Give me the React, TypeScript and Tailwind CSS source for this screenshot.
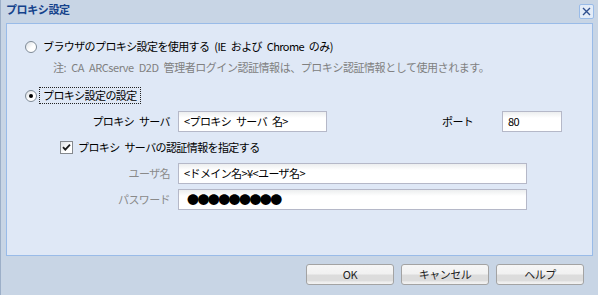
import React from "react";

const FONT = '"Noto Sans CJK JP", "Liberation Sans", sans-serif';

function Radio({ checked }: { checked?: boolean }) {
  return (
    <span className="relative flex h-[12px] w-[12px] shrink-0 items-center justify-center rounded-full border border-[#7f8b97] bg-[linear-gradient(135deg,#d9dde2_0%,#ffffff_55%,#ffffff_100%)]">
      {checked && <span className="h-[4px] w-[4px] rounded-full bg-black" />}
    </span>
  );
}

function Checkbox() {
  return (
    <span className="flex h-[13px] w-[13px] shrink-0 items-center justify-center border border-[#85898e] bg-[linear-gradient(135deg,#dcdfe3_0%,#ffffff_60%)]">
      <svg width="9" height="9" viewBox="0 0 9 9">
        <path d="M1 4.2 L3.3 6.6 L8 1.6" fill="none" stroke="#1a1a1a" strokeWidth="1.8" />
      </svg>
    </span>
  );
}

function Input({ w, children }: { w: string; children?: React.ReactNode }) {
  return (
    <div
      className={`${w} flex h-[21px] shrink-0 items-center border border-[#b5b8c8] bg-[linear-gradient(#eceeef_0px,#ffffff_6px,#ffffff_100%)] pl-[5px] text-[11px] tracking-[-0.6px] [word-spacing:3px] text-black`}
    >
      {children}
    </div>
  );
}

function Button({ label }: { label: string }) {
  return (
    <div className="flex h-[21px] w-[88px] items-center justify-center rounded-[3px] border border-[#a3a3a3] bg-[linear-gradient(#f6f6f6_0%,#f1f1f1_48%,#dcdcdc_52%,#dcdcdc_84%,#ececec_88%,#f2f2f2_100%)] text-[11px] tracking-[-0.5px] text-[#222]">
      {label}
    </div>
  );
}

export default function App() {
  return (
    <div
      className="flex h-[295px] w-[598px] flex-col border-l border-[#9cafc8] bg-[#c8d5e5]"
      style={{ fontFamily: FONT }}
    >
      {/* Title bar */}
      <div className="flex h-[23px] items-start justify-between pl-[5px] pr-[4px]">
        <span className="mt-[2px] text-[11px] font-bold leading-[14px] tracking-[-0.4px] text-[#15428b]">
          プロキシ設定
        </span>
        <span className="mt-[4px] flex h-[15px] w-[15px] items-center justify-center rounded-[2px] border border-[#99bbe8] bg-[#e3ecf8]">
          <svg width="9" height="9" viewBox="0 0 9 9">
            <path d="M1 1 L8 8 M8 1 L1 8" stroke="#2f4f8f" strokeWidth="1.4" />
          </svg>
        </span>
      </div>

      {/* Panel */}
      <div className="ml-[5px] mr-[5px] flex h-[233px] flex-col border border-[#99bbe8] bg-[#dfe8f6] text-[11px] tracking-[-0.6px] [word-spacing:3px] text-black">
        {/* Radio 1 */}
        <div className="mt-[14px] flex h-[17px] items-center gap-[6px] pl-[18px]">
          <Radio />
          <span>ブラウザのプロキシ設定を使用する (IE および Chrome のみ)</span>
        </div>
        {/* Note */}
        <div className="mt-[4px] flex h-[17px] items-center pl-[46px] tracking-[-0.45px] text-[#808080]">
          注: CA ARCserve D2D 管理者ログイン認証情報は、プロキシ認証情報として使用されます。
        </div>
        {/* Radio 2 */}
        <div className="mt-[11px] flex h-[17px] items-center gap-[2px] pl-[18px]">
          <Radio checked />
          <span className="flex h-[17px] items-center border border-dotted border-[#222] px-[3px]">
            プロキシ設定の設定
          </span>
        </div>
        {/* Proxy server row */}
        <div className="mt-[7px] flex items-center">
          <span className="w-[163px] text-right">プロキシ サーバ</span>
          <span className="w-[8px]" />
          <Input w="w-[149px]">&lt;プロキシ サーバ 名&gt;</Input>
          <span className="ml-[115px] w-[60px]">ポート</span>
          <Input w="w-[60px]">80</Input>
        </div>
        {/* Checkbox row */}
        <div className="mt-[7px] flex h-[17px] items-center gap-[5px] pl-[53px]">
          <Checkbox />
          <span>プロキシ サーバの認証情報を指定する</span>
        </div>
        {/* User row */}
        <div className="mt-[7px] flex items-center">
          <span className="w-[163px] text-right text-[#8a8a8a]">ユーザ名</span>
          <span className="w-[8px]" />
          <Input w="w-[349px]">&lt;ドメイン名&gt;¥&lt;ユーザ名&gt;</Input>
        </div>
        {/* Password row */}
        <div className="mt-[5px] flex items-center">
          <span className="w-[163px] text-right text-[#8a8a8a]">パスワード</span>
          <span className="w-[8px]" />
          <Input w="w-[349px]">
            <span className="pl-[3px] text-[12px] tracking-[-1.6px]">●●●●●●●●●</span>
          </Input>
        </div>
      </div>

      {/* Buttons */}
      <div className="mt-[8px] flex justify-end gap-[7px] pr-[14px]">
        <Button label="OK" />
        <Button label="キャンセル" />
        <Button label="ヘルプ" />
      </div>
    </div>
  );
}
